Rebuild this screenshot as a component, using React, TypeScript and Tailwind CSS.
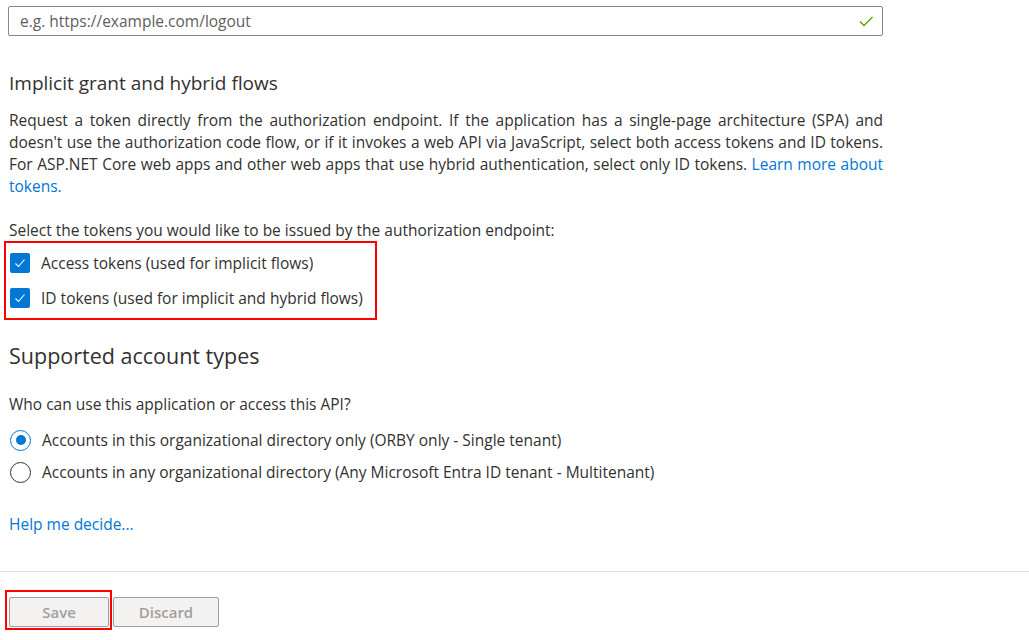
import React from "react";

const F = { fontFamily: '"Open Sans", "Noto Sans", sans-serif' };

function Check() {
  return (
    <span className="flex h-5 w-5 items-center justify-center rounded-[2px] bg-[#0078d4]">
      <svg width="14" height="14" viewBox="0 0 14 14" fill="none">
        <path d="M2.5 7.5 L5.5 10.5 L11.5 3.5" stroke="white" strokeWidth="1.1" />
      </svg>
    </span>
  );
}

export default function App() {
  return (
    <div className="relative h-[640px] w-[1029px] overflow-hidden bg-white text-[15.5px] text-[#323130]" style={F}>
      <div className="px-[8px] pt-[6px]">
        <div className="flex h-[30px] w-[875px] items-center justify-between rounded-[2px] border border-[#8a8886] pl-[11px] pr-[8px]">
          <span className="pt-px text-[15.5px] text-[#605e5c]">e.g. https://example.com/logout</span>
          <svg width="16" height="16" viewBox="0 0 16 16" fill="none">
            <path d="M2 8.5 L6 12.5 L14.5 4" stroke="#57a300" strokeWidth="1.4" />
          </svg>
        </div>
      </div>

      <div className="pl-[9px]">
        <h2 className="mt-[33px] text-[19px] leading-[28px]">Implicit grant and hybrid flows</h2>
        <div className="mt-[12px] w-[874px] leading-[22px]">
          <span className="block text-justify [text-align-last:justify]">Request a token directly from the authorization endpoint. If the application has a single-page architecture (SPA) and</span>
          <span className="block text-justify [text-align-last:justify]">doesn't use the authorization code flow, or if it invokes a web API via JavaScript, select both access tokens and ID tokens.</span>
          <span className="block text-justify [text-align-last:justify]">For ASP.NET Core web apps and other web apps that use hybrid authentication, select only ID tokens. <span className="text-[#0078d4]">Learn more about</span></span>
          <span className="block text-[#0078d4]">tokens.</span>
        </div>
        <div className="mt-[22px] leading-[22px]">Select the tokens you would like to be issued by the authorization endpoint:</div>
      </div>

      <div className="ml-[4px] w-[373px] border-2 border-[#ff0000] pl-[4px] pt-[9px] pb-[9px]">
        <div className="flex items-center gap-[11px]">
          <Check />
          <span className="leading-[22px]">Access tokens (used for implicit flows)</span>
        </div>
        <div className="mt-[13px] flex items-center gap-[11px]">
          <Check />
          <span className="leading-[22px]">ID tokens (used for implicit and hybrid flows)</span>
        </div>
      </div>

      <div className="pl-[9px]">
        <h2 className="mt-[21px] text-[21.5px] leading-[30px]">Supported account types</h2>
        <div className="mt-[22px] leading-[22px]">Who can use this application or access this API?</div>
        <div className="mt-[14px] flex items-center gap-[11px] pl-[1px]">
          <span className="flex h-[21px] w-[21px] items-center justify-center rounded-full border border-[#0078d4]">
            <span className="h-[10px] w-[10px] rounded-full bg-[#0078d4]" />
          </span>
          <span className="leading-[22px]">Accounts in this organizational directory only (ORBY only - Single tenant)</span>
        </div>
        <div className="mt-[10px] flex items-center gap-[11px] pl-[1px]">
          <span className="h-[21px] w-[21px] rounded-full border border-[#323130]" />
          <span className="leading-[22px]">Accounts in any organizational directory (Any Microsoft Entra ID tenant - Multitenant)</span>
        </div>
        <div className="mt-[30px] leading-[22px] text-[#0078d4]">Help me decide...</div>
      </div>

      <div className="mt-[36px] h-px w-full bg-[#e1dfdd]" />

      <div className="mt-[18px] flex items-start pl-[5px]">
        <div className="border-2 border-[#ff0000] pt-[5px] pl-[2px] pr-[1px] pb-px">
          <div className="flex h-[30px] w-[100px] items-center justify-center rounded-[2px] border border-[#a19f9d] bg-[#f3f2f1] text-[15px] font-semibold text-[#a19f9d]">Save</div>
        </div>
        <div className="ml-px mt-[7px] flex h-[30px] w-[106px] items-center justify-center rounded-[2px] border border-[#a19f9d] bg-[#f3f2f1] text-[15px] font-semibold text-[#a19f9d]">Discard</div>
      </div>
    </div>
  );
}
